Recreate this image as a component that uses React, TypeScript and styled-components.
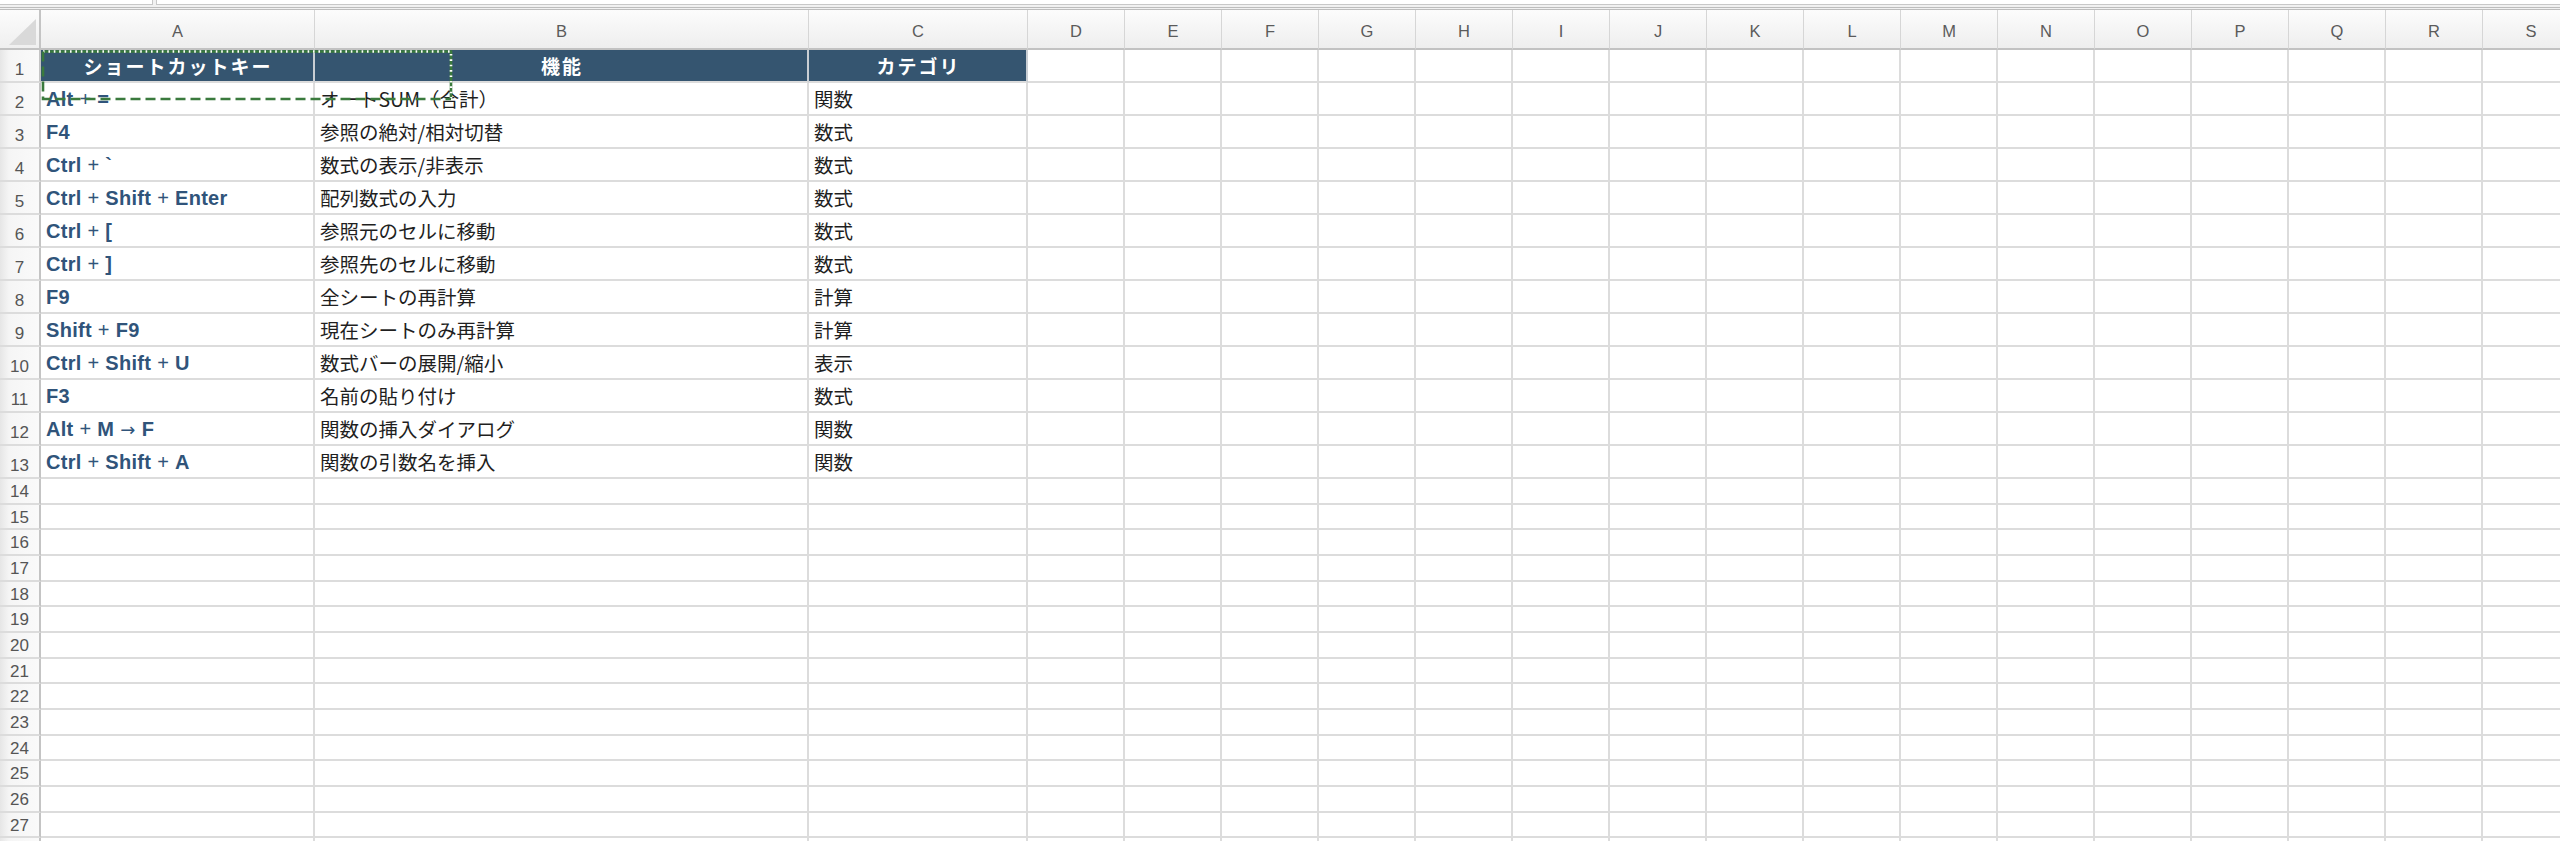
import React from 'react';
import styled, { createGlobalStyle } from 'styled-components';

const GlobalStyle = createGlobalStyle`
  html, body { margin: 0; padding: 0; background: #fff; overflow: hidden; }
  body { font-family: "Liberation Sans", "Noto Sans CJK JP", sans-serif; }
  * { box-sizing: border-box; }
`;

const Page = styled.div`
  width: 2560px;
  height: 841px;
  overflow: hidden;
  background: #fff;
`;

const FormulaStrip = styled.div`
  height: 10px;
  display: flex;
  align-items: flex-start;
  gap: 3px;
  background: #f1f1f1;
  border-bottom: 3px double #bdbdbd;
`;

const NameBox = styled.div`
  width: 153px;
  height: 5px;
  background: #fff;
  border-right: 1px solid #c8c8c8;
  border-bottom: 1px solid #c8c8c8;
`;

const FormulaBox = styled.div`
  flex: 1;
  height: 5px;
  background: #fff;
  border-left: 1px solid #c8c8c8;
  border-bottom: 1px solid #c8c8c8;
`;

const Sheet = styled.div`
  position: relative;
  display: grid;
  grid-template-columns: 41px 274px 494px 219px repeat(16, 97px);
  grid-template-rows: 40px repeat(13, 33px) repeat(15, 25.67px);
  width: max-content;
`;

const CellBase = styled.div`
  display: flex;
  align-items: center;
  min-width: 0;
  overflow: hidden;
  white-space: nowrap;
  border-right: 2px solid #dcdcdc;
  border-bottom: 2px solid #dcdcdc;
`;

const Corner = styled(CellBase)`
  position: relative;
  background: linear-gradient(#fcfcfc, #efefef);
  border-right: 2px solid #c4c4c4;
  border-bottom: 2px solid #c2c2c2;
  align-items: flex-end;
  justify-content: flex-end;
  padding: 0 3px 3px 0;
`;

const ColHead = styled(CellBase)`
  justify-content: center;
  padding-top: 4px;
  background: linear-gradient(#fcfcfc, #eeeeee);
  border-right: 1px solid #d6d6d6;
  border-bottom: 2px solid #c2c2c2;
  color: #5b5b5b;
  font-size: 16.5px;
`;

const RowHead = styled(CellBase)`
  justify-content: center;
  align-items: flex-end;
  line-height: 1.1;
  background: linear-gradient(to right, #e6e6e6 0, #f5f5f5 9px, #fafafa 100%);
  border-right: 2px solid #c4c4c4;
  color: #555;
  font-size: 17px;
  padding-bottom: 1px;
`;

const HeaderCell = styled(CellBase)`
  justify-content: center;
  background: #355570;
  border-right: 2px solid #c9ced3;
  color: #fff;
  font-family: "Noto Sans CJK JP", sans-serif;
  font-weight: 700;
  font-size: 19px;
  letter-spacing: 2px;
  line-height: 1;
  padding-left: 2px;
`;

const KeyCell = styled(CellBase)`
  padding-left: 5px;
  color: #30547a;
  font-weight: 700;
  font-size: 20px;
  letter-spacing: 0.3px;
  line-height: 1;
`;

const KeyLabel = styled.span`
  white-space: pre;
`;

const Plus = styled.span`
  font-weight: 400;
`;

const Arrow = styled.span`
  font-family: "DejaVu Sans", sans-serif;
  font-weight: 400;
  font-size: 18px;
`;

const TextCell = styled(CellBase)`
  padding-left: 5px;
  color: #1f1f1f;
  font-family: "Noto Sans CJK JP", sans-serif;
  font-size: 19.5px;
  line-height: 1;
`;

const EmptyCell = styled(CellBase)`
  background: #fff;
`;

const Overlay = styled.svg`
  position: absolute;
  left: 0;
  top: 0;
  width: 470px;
  height: 110px;
  pointer-events: none;
  overflow: visible;
`;

const letters = 'ABCDEFGHIJKLMNOPQRS'.split('');

const headers = ['ショートカットキー', '機能', 'カテゴリ'];

const rows: [string, string, string][] = [
  ['Alt + =', 'オートSUM（合計）', '関数'],
  ['F4', '参照の絶対/相対切替', '数式'],
  ['Ctrl + `', '数式の表示/非表示', '数式'],
  ['Ctrl + Shift + Enter', '配列数式の入力', '数式'],
  ['Ctrl + [', '参照元のセルに移動', '数式'],
  ['Ctrl + ]', '参照先のセルに移動', '数式'],
  ['F9', '全シートの再計算', '計算'],
  ['Shift + F9', '現在シートのみ再計算', '計算'],
  ['Ctrl + Shift + U', '数式バーの展開/縮小', '表示'],
  ['F3', '名前の貼り付け', '数式'],
  ['Alt + M → F', '関数の挿入ダイアログ', '関数'],
  ['Ctrl + Shift + A', '関数の引数名を挿入', '関数'],
];

const emptyRowCount = 15;

function KeyText({ text }: { text: string }) {
  const tokens = text.split(/( \+ | → )/);
  return (
    <KeyLabel>
      {tokens.map((t, i) => {
        if (t === ' + ') return <Plus key={i}>{t}</Plus>;
        if (t === ' → ') return <Arrow key={i}>{t}</Arrow>;
        return <React.Fragment key={i}>{t}</React.Fragment>;
      })}
    </KeyLabel>
  );
}

function Empties({ count, prefix }: { count: number; prefix: string }) {
  return (
    <>
      {Array.from({ length: count }, (_, i) => (
        <EmptyCell key={`${prefix}-${i}`} />
      ))}
    </>
  );
}

export default function App() {
  const extraCols = letters.length - 3;
  return (
    <Page>
      <GlobalStyle />
      <FormulaStrip>
        <NameBox />
        <FormulaBox />
      </FormulaStrip>
      <Sheet>
        <Corner>
          <svg width="27" height="26" viewBox="0 0 27 26">
            <polygon points="27,0 27,26 0,26" fill="#d9d9d9" />
          </svg>
        </Corner>
        {letters.map((l) => (
          <ColHead key={l}>{l}</ColHead>
        ))}

        <RowHead>1</RowHead>
        {headers.map((h) => (
          <HeaderCell key={h}>{h}</HeaderCell>
        ))}
        <Empties count={extraCols} prefix="r1" />

        {rows.map((r, i) => (
          <React.Fragment key={i}>
            <RowHead>{i + 2}</RowHead>
            <KeyCell>
              <KeyText text={r[0]} />
            </KeyCell>
            <TextCell>{r[1]}</TextCell>
            <TextCell>{r[2]}</TextCell>
            <Empties count={extraCols} prefix={`r${i + 2}`} />
          </React.Fragment>
        ))}

        {Array.from({ length: emptyRowCount }, (_, i) => (
          <React.Fragment key={`e${i}`}>
            <RowHead>{i < emptyRowCount - 1 ? 14 + i : ''}</RowHead>
            <Empties count={letters.length} prefix={`e${i}`} />
          </React.Fragment>
        ))}

        <Overlay viewBox="0 0 470 110">
          <path d="M43 41.5 H451 V89" fill="none" stroke="#3a7a3d" strokeWidth="2.6" />
          <path d="M43 41.5 H451 V89" fill="none" stroke="#ffffff" strokeWidth="2.6" strokeDasharray="1.6 3.8" />
          <path d="M43 41.5 V89 H451" fill="none" stroke="#3a7a3d" strokeWidth="2.6" strokeDasharray="10 5" />
        </Overlay>
      </Sheet>
    </Page>
  );
}
